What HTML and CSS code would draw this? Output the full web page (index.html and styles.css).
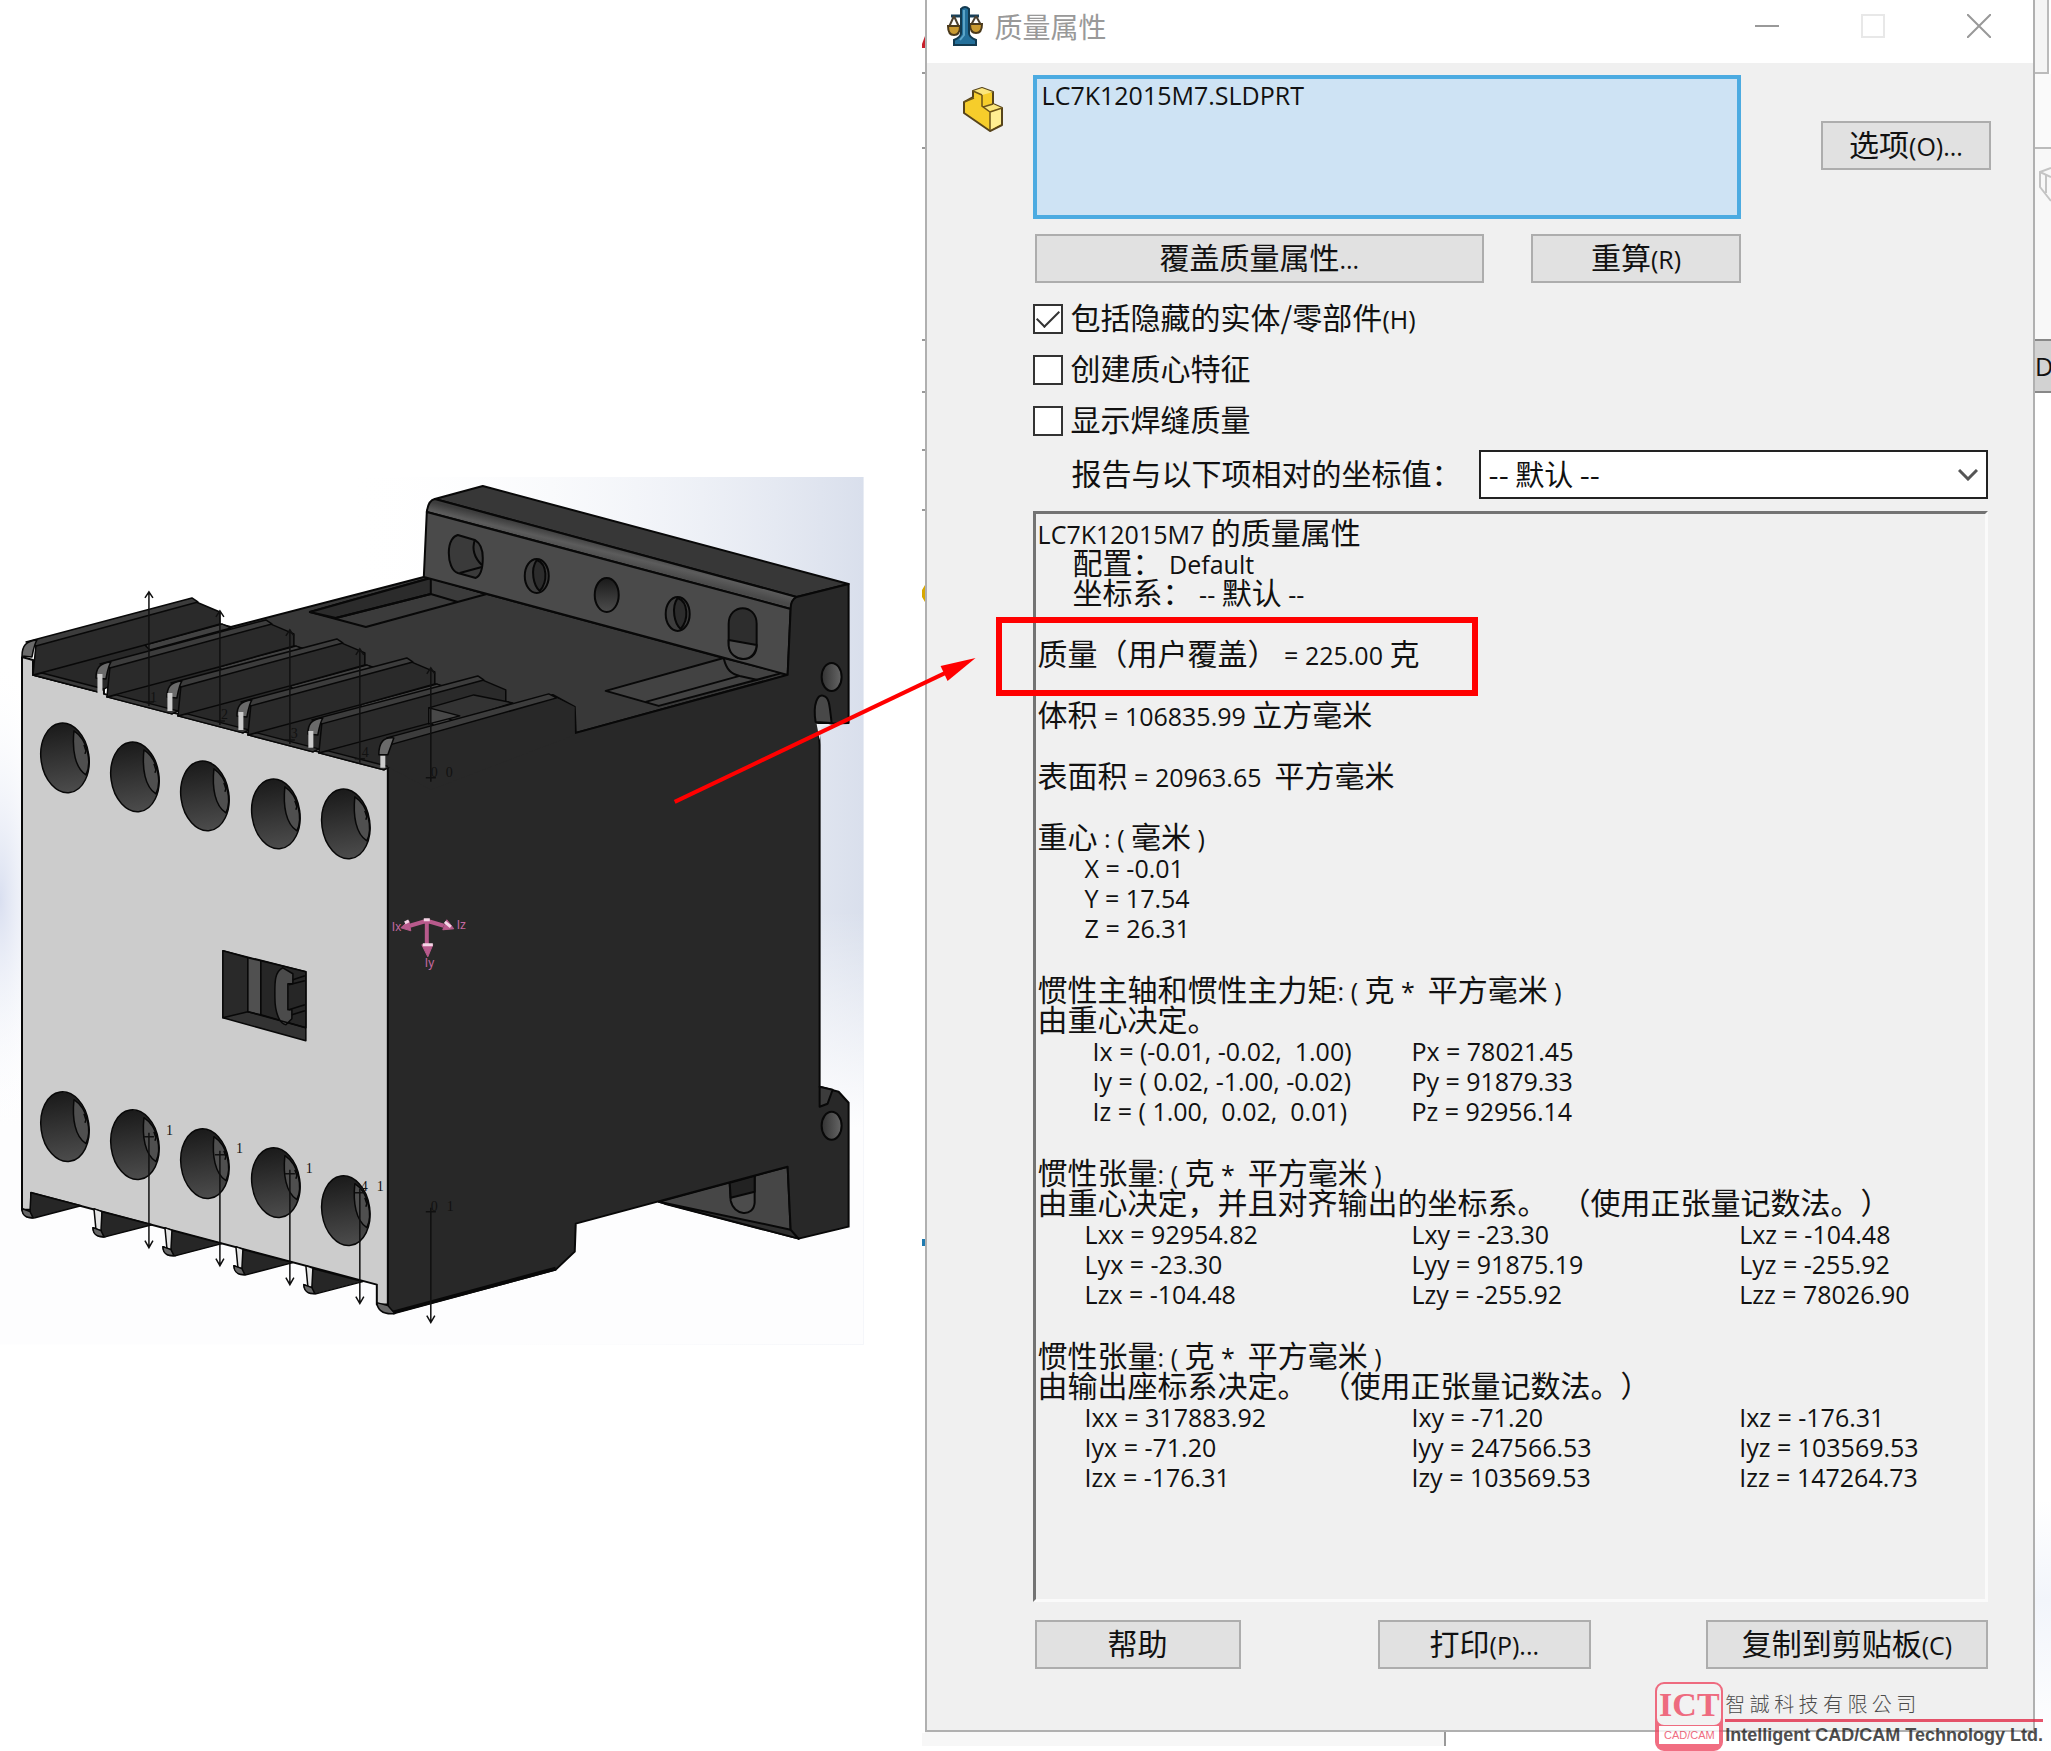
FILE: index.html
```html
<!DOCTYPE html>
<html lang="zh-CN">
<head>
  <meta charset="UTF-8" />
  <meta name="viewport" content="width=device-width, initial-scale=1.0" />
  <title>质量属性</title>
  <link rel="stylesheet" href="styles.css">
</head>
<body>
  <div class="page">
    <div class="model-pane">
      <svg class="model" viewBox="0 477 864 868" role="img" aria-label="LC7K12015M7">
        <defs>
          <linearGradient id="skyRight" x1="0" y1="0" x2="1" y2="0">
            <stop offset="0.4" stop-color="#ffffff" stop-opacity="0" />
            <stop offset="1" stop-color="#d9dfec" />
          </linearGradient>
          <radialGradient id="skyLeft" gradientUnits="userSpaceOnUse" cx="0" cy="0" r="1" gradientTransform="translate(0 900) scale(60 240)">
            <stop offset="0" stop-color="#d9dff0" />
            <stop offset="1" stop-color="#ffffff" stop-opacity="0" />
          </radialGradient>
          <linearGradient id="skyFade" x1="0" y1="0" x2="0" y2="1">
            <stop offset="0.5" stop-color="#ffffff" stop-opacity="0" />
            <stop offset="0.75" stop-color="#fdfdfe" />
          </linearGradient>
          <linearGradient id="bore" x1="0" y1="0" x2="0" y2="1">
            <stop offset="0" stop-color="#1a1a1a" />
            <stop offset="1" stop-color="#4c4c4c" />
          </linearGradient>
          <linearGradient id="pin" x1="0" y1="0" x2="1" y2="0">
            <stop offset="0" stop-color="#333333" />
            <stop offset="1" stop-color="#666666" />
          </linearGradient>
          <linearGradient id="bevel" gradientUnits="userSpaceOnUse" x1="615" y1="545" x2="611" y2="562">
            <stop offset="0" stop-color="#3c3c3c" />
            <stop offset="0.5" stop-color="#5c5c5c" />
            <stop offset="1" stop-color="#4a4a4a" />
          </linearGradient>
          <g id="terminal">
            <ellipse rx="24" ry="35" transform="rotate(-8)" fill="url(#bore)" />
            <path d="M9 -27C7 -8 10 10 21 17C27 5 23 -18 9 -27Z" fill="#4f4f4f" />
            <path d="M19 -13l2 6l-1 3" fill="none" />
          </g>
          <g id="fin">
            <path d="M33 675L145 642L220 624L232 627L98 692Z" fill="#282828" />
            <path d="M33 675L98 692L104 689L42 673Z" fill="#3a3a3a" />
            <path d="M145 645L222 624L231 628L150 650Z" fill="#424242" />
            <path d="M33 675L36 645L194 601L220 612V624L145 645Z" fill="#2a2a2a" />
            <path d="M26 642L192 598L198 602L36 646Z" fill="#3c3c3c" />
            <path d="M22 656C22 646 26 641 37 640C34 645 33 652 32 657Z" fill="#6a6a6a" />
          </g>
          <g id="lowerFin">
            <path d="M31 1193L81 1206L35 1218C28 1219 23 1217 22 1209L30 1212Z" fill="#262626" />
            <path d="M22 1209L30 1212L33 1218C26 1218 22 1216 22 1209Z" fill="#666666" />
          </g>
          <path id="axisUp" d="M0 0V114M-4 6L0 0L4 6M-5 110H5" fill="none" />
          <path id="axisDown" d="M0 -4V111M-4 104L0 111L4 104M-5 0H5" fill="none" />
        </defs>

        <rect y="477" width="864" height="868" fill="#ffffff" />
        <rect y="477" width="864" height="868" fill="url(#skyRight)" />
        <rect y="477" width="864" height="868" fill="url(#skyFade)" />
        <rect y="477" width="864" height="868" fill="url(#skyLeft)" />

        <g stroke="#080808" stroke-width="2" stroke-linejoin="round">
          <!-- top deck -->
          <path d="M200 640L231 627L424 577L724 658L788 675L576 733L480 760L388 760L150 700Z" fill="#383838" />
          <path d="M310 612L431 578L487 594L366 627Z" fill="#3b3b3b" />
          <path d="M310 612L431 578V594L336 618Z" fill="#2b2b2b" />
          <path d="M336 618L431 594L458 602M431 578L487 594" fill="none" />
          <path d="M606 691L724 658L783 673L659 706Z" fill="#424242" />
          <path d="M646 702L740 676L758 680M724 658C727 671 732 674 740 676" fill="none" />

          <!-- rear mounting flange -->
          <path d="M435 499L483 486L849 584L797 597Z" fill="#373737" />
          <path d="M427 512C428 504 430 500 435 499L797 597C793 600 791 604 791 609Z" fill="url(#bevel)" />
          <path d="M427 512L791 609L788 675L424 577Z" fill="#4a4a4a" />
          <path d="M449 553C449 541 454 536 458 535L475 540C480 543 483 550 483 558C483 570 480 576 476 578L458 573C452 571 449 562 449 553Z" fill="#3a3a3a" />
          <path d="M475 540C472 549 475 558 482 565M460 573L482 567" fill="none" />
          <ellipse cx="537" cy="576" rx="12" ry="17" fill="#3d3d3d" />
          <path d="M537 560C530 570 534 586 540 591C548 582 548 564 537 560Z" fill="#2c2c2c" />
          <ellipse cx="607" cy="595" rx="12" ry="17" fill="url(#bore)" />
          <ellipse cx="678" cy="614" rx="12" ry="17" fill="#3d3d3d" />
          <path d="M678 598C671 608 675 624 681 629C689 620 689 602 678 598Z" fill="#2c2c2c" />
          <path d="M729 624C729 603 757 603 757 624V646C756 666 729 662 729 642Z" fill="#2d2d2d" />
          <path d="M729 640L757 645C756 664 731 663 729 646Z" fill="#4c4c4c" />

          <!-- lower flange -->
          <path d="M659 1202L788 1167L791 1230L799 1239Z" fill="#464646" />
          <path d="M659 1202L791 1230L799 1239L665 1204Z" fill="#303030" />
          <path d="M730 1183L755 1176V1203C754 1218 734 1216 731 1201Z" fill="#4c4c4c" />
          <path d="M730 1183L755 1176V1192L731 1198Z" fill="#222222" />

          <!-- side wall -->
          <path d="M387 750V742L553 695L575 707L576 733L788 675L791 609C791 603 793 599 797 597L849 584V723L819 724L820 745V1087L839 1092L849 1103V1227L799 1239L791 1230L788 1167L576 1224L575 1252L556 1270L395 1313L388 1313Z" fill="#282828" />
          <path d="M393 1313L556 1269" stroke-width="4" />
          <path d="M820 1087L833 1090L828 1104L820 1107Z" fill="#3c3c3c" />
          <ellipse cx="832" cy="677" rx="10" ry="14" fill="url(#pin)" />
          <path d="M816 722C813 704 818 694 824 696C830 697 830 707 832 723Z" fill="#484848" />
          <path d="M817 724H832L822 727L820 740Z" fill="#eef0f5" stroke="none" />
          <ellipse cx="832" cy="1126" rx="10" ry="14" fill="url(#pin)" />

          <!-- front cover -->
          <path d="M22 657L33 660V675L98 692V668L104 664V694L168 711V686L174 682V713L238 730V705L245 701V732L309 749V724L315 720V751L379 767V748L388 745V1305H377V1285L31 1193V1210H22Z" fill="#cccccc" />
        </g>

        <g stroke="#080808" stroke-width="1.5" stroke-linejoin="round">
          <use href="#fin" />
          <use href="#fin" x="74" y="22" />
          <use href="#fin" x="145" y="41" />
          <use href="#fin" x="215" y="60" />
          <use href="#fin" x="286" y="78" />
          <path d="M429 708L474 695L513 703L455 722Z" fill="#333333" />
          <path d="M429 708V724L460 716Z" fill="#484848" />
          <path d="M388 767V744L553 696L575 707V735L431 790Z" fill="#282828" stroke="none" />
          <path d="M387 738L549 694L557 698L390 745Z" fill="#3c3c3c" />
          <path d="M379 755C379 742 384 737 394 738L388 755Z" fill="#6a6a6a" />
          <path d="M100 674V693M170 693V711M241 712V730M311 731V748M383 756V768" stroke="#cccccc" stroke-width="5" />
          <use href="#lowerFin" />
          <path d="M94 1209L102 1212L104 1237L96 1230ZM165 1228L173 1231L175 1256L167 1249ZM236 1247L244 1250L246 1275L238 1268ZM306 1266L314 1269L316 1294L308 1287Z" fill="#e4e4e4" />
          <use href="#lowerFin" x="71" y="19" />
          <use href="#lowerFin" x="141" y="38" />
          <use href="#lowerFin" x="212" y="57" />
          <use href="#lowerFin" x="282" y="76" />
          <path d="M377 1303L388 1306L395 1314C384 1315 378 1312 377 1303Z" fill="#666666" />

          <use href="#terminal" x="65" y="758" />
          <use href="#terminal" x="135" y="777" />
          <use href="#terminal" x="205" y="796" />
          <use href="#terminal" x="276" y="814" />
          <use href="#terminal" x="346" y="824" />
          <use href="#terminal" x="65" y="1127" />
          <use href="#terminal" x="135" y="1145" />
          <use href="#terminal" x="205" y="1164" />
          <use href="#terminal" x="276" y="1183" />
          <use href="#terminal" x="346" y="1211" />

          <!-- indicator window -->
          <path d="M223 951L306 972V1041L223 1018Z" fill="#333333" />
          <path d="M223 951L248 958V1012L223 1018Z" fill="#292929" />
          <path d="M248 958L261 961V1015L248 1012Z" fill="#505050" />
          <path d="M261 961L306 972V1028L261 1015Z" fill="#262626" />
          <path d="M283 968C274 972 275 985 275 997C275 1014 280 1024 286 1025L292 1019V1010L288 1010V984L293 984V974Z" fill="#4b4b4b" />
          <path d="M293 980L305 976M289 985L305 981M289 1010L305 1005M292 1015L305 1011M248 1012L306 1028" fill="none" />
        </g>

        <g stroke="#101010" stroke-width="1.5">
          <use href="#axisUp" x="149" y="592" />
          <use href="#axisUp" x="220" y="611" />
          <use href="#axisUp" x="290" y="630" />
          <use href="#axisUp" x="360" y="649" />
          <use href="#axisUp" x="431" y="668" />
          <use href="#axisDown" x="149" y="1137" />
          <use href="#axisDown" x="220" y="1155" />
          <use href="#axisDown" x="290" y="1174" />
          <use href="#axisDown" x="360" y="1193" />
          <use href="#axisDown" x="431" y="1212" />
        </g>
        <g class="axis-label">
          <text x="150" y="702">1</text>
          <text x="221" y="719">2</text>
          <text x="291" y="738">3</text>
          <text x="362" y="757">4</text>
          <text x="166" y="1135">1</text>
          <text x="236" y="1153">1</text>
          <text x="306" y="1173">1</text>
          <text x="361" y="1191">4</text>
          <text x="377" y="1191">1</text>
          <text x="431" y="1211">0</text>
          <text x="447" y="1211">1</text>
          <text x="431" y="777">0</text>
          <text x="446" y="777">0</text>
        </g>

        <!-- centre of mass triad -->
        <g fill="#b85a8c" stroke="#b85a8c">
          <path d="M427 922V948M427 921L410 926M427 921L444 926" fill="none" stroke-width="4" />
          <path d="M401 928L409 921L411 931ZM454 929L443 930L447 920ZM428 957L422 945H433Z" />
          <path d="M405 923L409 921M445 922L451 927M423 945H433M424 920H430" stroke="#f5d5e6" stroke-width="3" />
        </g>
        <g class="triad-label">
          <text x="392" y="931">Ix</text>
          <text x="457" y="929">Iz</text>
          <text x="425" y="967">Iy</text>
        </g>

        <path d="M675 802L948 672" stroke="#ff0000" stroke-width="4" />
        <path d="M976 658L941 666L948 681Z" fill="#ff0000" />
      </svg>
    </div>

    <svg class="left-edge" viewBox="0 0 3 1751" preserveAspectRatio="none" aria-hidden="true">
      <path d="M3 36V48H0V44Z" fill="#c8202c" />
      <path d="M0 73H3M0 148H3M0 340H3M0 392H3M0 450H3M0 510H3" stroke="#999999" stroke-width="2" />
      <path d="M3 585L0 590V597L3 602Z" fill="#d8a800" />
      <path d="M0 1239H3V1246H0Z" fill="#1f7bb0" />
      <path d="M0 1733H3V1746H0Z" fill="#f7f7f7" />
    </svg>

    <div class="dialog-column">
      <section class="dialog">
        <header class="title-bar">
          <svg class="scale-icon" viewBox="0 0 36 40" aria-hidden="true">
            <path d="M4 10H32" stroke="#173f58" stroke-width="3" />
            <path d="M7 10L2 21M7 10L12 21M29 10L24 19M29 10L34 19" stroke="#4b4030" stroke-width="2" />
            <path d="M1 20H13C13 27 10 29 7 29S1 27 1 20ZM23 18H35C35 25 32 27 29 27S23 25 23 18Z" fill="#c99a32" stroke="#4b3a1c" stroke-width="2" />
            <path d="M14 3Q18 -1 22 3V27Q22 31 29 34V39H7V34Q14 31 14 27Z" fill="#24709b" stroke="#123a50" stroke-width="2" />
            <path d="M17 4V29L13 34" fill="none" stroke="#5ca5c8" stroke-width="2" />
          </svg>
          <h1>质量属性</h1>
          <div class="window-controls">
            <button type="button" aria-label="最小化"><svg viewBox="0 0 24 24"><path d="M0 12H24" stroke="#999999" stroke-width="2" /></svg></button>
            <button type="button" aria-label="最大化" disabled><svg viewBox="0 0 24 24"><path d="M1 1H23V23H1Z" fill="none" stroke="#e8e8e8" stroke-width="2" /></svg></button>
            <button type="button" aria-label="关闭"><svg viewBox="0 0 24 24"><path d="M0 0L24 24M24 0L0 24" stroke="#999999" stroke-width="2" /></svg></button>
          </div>
        </header>

        <div class="dialog-body">
          <div class="selection">
            <svg class="part-icon" viewBox="0 0 42 46" aria-hidden="true">
              <path d="M2 15L11 10V4L20 1L31 5V17L40 21V38L28 44L2 26Z" fill="#f6cd2b" stroke="#57441b" stroke-width="2" stroke-linejoin="round" />
              <path d="M11 4L20 8L31 5L20 1ZM27 24L40 21L31 17L21 19Z" fill="#fbe67c" />
              <path d="M28 25L39 21V37L28 43Z" fill="#ffee92" />
              <path d="M20 8V19L28 25V43M28 25L40 21M11 4L20 8M31 17L21 20M2 15L12 11" fill="none" stroke="#6b5318" stroke-width="1.5" />
            </svg>
            <div class="file-list">LC7K12015M7.SLDPRT</div>
            <button type="button" class="btn btn-options"><span class="cn">选项</span>(O)...</button>
          </div>

          <div class="content">
            <div class="actions">
              <button type="button" class="btn btn-override"><span class="cn">覆盖质量属性</span>...</button>
              <button type="button" class="btn btn-recalc"><span class="cn">重算</span>(R)</button>
            </div>

            <div class="checks">
              <label class="check"><input type="checkbox" checked><span><span class="cn">包括隐藏的实体/零部件</span>(H)</span></label>
              <label class="check"><input type="checkbox"><span><span class="cn">创建质心特征</span></span></label>
              <label class="check"><input type="checkbox"><span><span class="cn">显示焊缝质量</span></span></label>
            </div>

            <div class="coordinate">
              <label for="coordinate"><span class="cn">报告与以下项相对的坐标值：</span></label>
              <div class="select-box">
                <select id="coordinate"><option>-- 默认 --</option></select>
                <svg viewBox="0 0 20 12" aria-hidden="true"><path d="M1 1L10 10L19 1" fill="none" stroke="#555555" stroke-width="3" /></svg>
              </div>
            </div>

            <div class="report">
              <div class="group">
                <p>LC7K12015M7 <span class="cn">的质量属性</span></p>
                <p class="indent"><span class="cn">配置：</span> Default</p>
                <p class="indent"><span class="cn">坐标系：</span> -- <span class="cn">默认</span> --</p>
              </div>
              <div class="group marked">
                <p><span class="cn">质量（用户覆盖）</span> = 225.00 <span class="cn">克</span></p>
              </div>
              <div class="group">
                <p><span class="cn">体积</span> = 106835.99 <span class="cn">立方毫米</span></p>
              </div>
              <div class="group">
                <p><span class="cn">表面积</span> = 20963.65  <span class="cn">平方毫米</span></p>
              </div>
              <div class="group">
                <p><span class="cn">重心</span> : ( <span class="cn">毫米</span> )</p>
                <table>
                  <tr><td>X = -0.01</td></tr>
                  <tr><td>Y = 17.54</td></tr>
                  <tr><td>Z = 26.31</td></tr>
                </table>
              </div>
              <div class="group">
                <p><span class="cn">惯性主轴和惯性主力矩</span>: ( <span class="cn">克</span> *  <span class="cn">平方毫米</span> )</p>
                <p><span class="cn">由重心决定。</span></p>
                <table class="axes">
                  <tr><td>Ix = (-0.01, -0.02,  1.00)</td><td>Px = 78021.45</td><td></td></tr>
                  <tr><td>Iy = ( 0.02, -1.00, -0.02)</td><td>Py = 91879.33</td><td></td></tr>
                  <tr><td>Iz = ( 1.00,  0.02,  0.01)</td><td>Pz = 92956.14</td><td></td></tr>
                </table>
              </div>
              <div class="group">
                <p><span class="cn">惯性张量</span>: ( <span class="cn">克</span> *  <span class="cn">平方毫米</span> )</p>
                <p><span class="cn">由重心决定，并且对齐输出的坐标系。</span>  <span class="cn">（使用正张量记数法。）</span></p>
                <table>
                  <tr><td>Lxx = 92954.82</td><td>Lxy = -23.30</td><td>Lxz = -104.48</td></tr>
                  <tr><td>Lyx = -23.30</td><td>Lyy = 91875.19</td><td>Lyz = -255.92</td></tr>
                  <tr><td>Lzx = -104.48</td><td>Lzy = -255.92</td><td>Lzz = 78026.90</td></tr>
                </table>
              </div>
              <div class="group">
                <p><span class="cn">惯性张量</span>: ( <span class="cn">克</span> *  <span class="cn">平方毫米</span> )</p>
                <p><span class="cn">由输出座标系决定。</span>  <span class="cn">（使用正张量记数法。）</span></p>
                <table>
                  <tr><td>Ixx = 317883.92</td><td>Ixy = -71.20</td><td>Ixz = -176.31</td></tr>
                  <tr><td>Iyx = -71.20</td><td>Iyy = 247566.53</td><td>Iyz = 103569.53</td></tr>
                  <tr><td>Izx = -176.31</td><td>Izy = 103569.53</td><td>Izz = 147264.73</td></tr>
                </table>
              </div>
            </div>

            <footer class="footer">
              <button type="button" class="btn btn-help"><span class="cn">帮助</span></button>
              <button type="button" class="btn btn-print"><span class="cn">打印</span>(P)...</button>
              <button type="button" class="btn btn-copy"><span class="cn">复制到剪贴板</span>(C)</button>
            </footer>
          </div>
        </div>
      </section>
      <div class="status-strip"></div>
    </div>

    <div class="right-edge">
      <div class="edge-tabs"></div>
      <div class="edge-row"></div>
      <div class="edge-tools">
        <svg viewBox="0 0 12 36" aria-hidden="true"><path d="M12 1L1 5V20L12 34M1 5L12 10M7 8V26" fill="none" stroke="#c4c4c4" stroke-width="2" /></svg>
      </div>
      <div class="edge-header">D</div>
    </div>

    <div class="watermark">
      <div class="badge">
        <strong>ICT</strong>
        <span>CAD/CAM</span>
      </div>
      <div class="company">
        <div class="company-cn" lang="zh-TW">智 誠 科 技 有 限 公 司</div>
        <div class="company-en">Intelligent CAD/CAM Technology Ltd.</div>
      </div>
    </div>
  </div>
</body>
</html>
```
FILE: styles.css
```css
*, *::before, *::after {
  box-sizing: border-box;
}
body {
  margin: 0;
  background: #ffffff;
  color: #111111;
  font-family: 'Open Sans', 'Noto Sans CJK SC', sans-serif;
  font-size: 25px;
  line-height: 30px;
}
.page {
  position: relative;
  display: grid;
  grid-template-columns: minmax(0, 83fr) 3px minmax(0, 100fr) 16px;
  min-height: 100vh;
  overflow: hidden;
}
.cn {
  font-family: 'Noto Sans CJK SC', sans-serif;
  font-size: 30px;
  line-height: 0;
  text-spacing-trim: space-all;
}

/* model picture */
.model-pane {
  display: flex;
  align-items: center;
  padding: 71px 58px 0 0;
}
.model {
  position: relative;
  z-index: 2;
  display: block;
  width: 100%;
  overflow: visible;
}
.axis-label {
  font-family: 'Liberation Serif', serif;
  font-size: 14px;
  fill: #111111;
}
.triad-label {
  font-family: 'Liberation Sans', sans-serif;
  font-size: 12px;
  fill: #c468a0;
}
.left-edge {
  width: 3px;
  height: 100%;
}

/* dialog */
.dialog-column {
  display: flex;
  flex-direction: column;
}
.dialog {
  flex: 1;
  display: flex;
  flex-direction: column;
  background: #f0f0f0;
  border: 2px solid #b0b0b0;
  border-top: none;
}
.title-bar {
  display: flex;
  align-items: center;
  height: 63px;
  padding: 0 42px 11px 20px;
  background: #ffffff;
}
.scale-icon {
  width: 36px;
  height: 40px;
}
.title-bar h1 {
  margin: 0 0 0 12px;
  font-family: 'Noto Sans CJK SC', sans-serif;
  font-size: 28px;
  font-weight: 400;
  color: #999999;
}
.window-controls {
  display: flex;
  gap: 82px;
  margin-left: auto;
}
.window-controls button {
  width: 24px;
  height: 24px;
  padding: 0;
  border: none;
  background: none;
}
.window-controls svg {
  display: block;
  width: 24px;
  height: 24px;
}
.dialog-body {
  flex: 1;
  display: flex;
  flex-direction: column;
  padding: 12px 42px 61px 35px;
}
.selection {
  display: grid;
  grid-template-columns: 71px 1fr 170px;
}
.part-icon {
  width: 42px;
  height: 46px;
  margin-top: 12px;
}
.file-list {
  height: 144px;
  margin-right: 80px;
  padding: 1px 5px;
  border: 4px solid #4cabe1;
  background: #cee3f4;
}
.btn {
  height: 49px;
  padding: 0;
  border: 2px solid #adadad;
  background: #e1e1e1;
  color: #111111;
  font: inherit;
  white-space: nowrap;
}
.btn-options {
  margin-top: 46px;
}
.content {
  flex: 1;
  display: flex;
  flex-direction: column;
  padding-left: 71px;
}
.actions {
  display: flex;
  gap: 47px;
  margin: 15px 250px 0 2px;
}
.btn-override {
  flex: 1;
}
.btn-recalc {
  width: 210px;
}
.checks {
  margin-top: 10px;
}
.check {
  display: flex;
  align-items: center;
  height: 51px;
}
.check input {
  appearance: none;
  display: grid;
  place-items: center;
  width: 30px;
  height: 30px;
  margin: 0 8px 0 0;
  border: 2px solid #333333;
  background: #ffffff;
}
.check input:checked::before {
  content: '';
  width: 22px;
  height: 12px;
  margin-bottom: 6px;
  border-left: 2px solid #333333;
  border-bottom: 2px solid #333333;
  transform: rotate(-45deg);
}
.coordinate {
  display: flex;
  align-items: center;
  gap: 17px;
  margin: 4px 3px 0 39px;
}
.select-box {
  position: relative;
  flex: 1;
}
.select-box select {
  appearance: none;
  width: 100%;
  height: 49px;
  padding: 0 8px 6px;
  border: 2px solid #222222;
  border-radius: 0;
  background: #ffffff;
  color: #111111;
  font-family: 'Noto Sans CJK SC', sans-serif;
  font-size: 29px;
}
.select-box svg {
  position: absolute;
  top: 19px;
  right: 10px;
  width: 20px;
  height: 12px;
}

/* report */
.report {
  flex: 1;
  margin: 12px 3px 0 0;
  padding: 5px 0 0 2px;
  border: 3px solid;
  border-color: #737373 #fafafa #fafafa #737373;
}
.report .group {
  margin-bottom: 31px;
}
.report p {
  height: 30px;
  margin: 0;
  white-space: pre;
}
.report .indent {
  padding-left: 35px;
}
.report table {
  width: 100%;
  margin-bottom: 33px;
  table-layout: fixed;
  border-collapse: collapse;
}
.report td {
  height: 30px;
  padding: 0 0 0 47px;
  white-space: pre;
}
.report td + td {
  padding-left: 58px;
}
.report td + td + td {
  padding-left: 70px;
}
.report .axes td:first-child {
  padding-left: 55px;
}
.marked {
  position: relative;
}
.marked::after {
  content: '';
  position: absolute;
  top: -23px;
  left: -42px;
  width: 482px;
  height: 79px;
  border: 6px solid #ff0000;
}
.footer {
  display: flex;
  justify-content: space-between;
  margin: 18px 3px 0 2px;
}
.btn-help {
  width: 206px;
}
.btn-print {
  width: 213px;
  margin-left: 22px;
}
.btn-copy {
  width: 282px;
}
.status-strip {
  width: 47%;
  height: 14px;
  margin-bottom: 5px;
  background: #f7f7f7;
  border-right: 2px solid #999999;
}

/* application window behind the dialog */
.right-edge {
  background: linear-gradient(#ffffff 1500px, #f2f5fb 1600px, #ffffff);
}
.edge-tabs {
  height: 74px;
  margin-right: 2px;
  background: #f5f5f5;
  border-right: 2px solid #bbbbbb;
  border-bottom: 2px solid #bbbbbb;
}
.edge-row {
  height: 75px;
  background: #fafafa;
  border-bottom: 2px solid #bbbbbb;
}
.edge-tools {
  height: 190px;
  padding: 18px 0 0 4px;
  background: #f8f8f8;
}
.edge-tools svg {
  display: block;
  width: 12px;
  height: 36px;
}
.edge-header {
  height: 54px;
  border: 2px solid #888888;
  border-width: 2px 0;
  background: #d2d2d2;
  line-height: 50px;
  overflow: hidden;
}

/* company mark */
.watermark {
  position: absolute;
  right: 8px;
  bottom: 0;
  display: flex;
  gap: 2px;
  opacity: 0.8;
}
.badge {
  display: flex;
  flex-direction: column;
  justify-content: space-between;
  width: 68px;
  height: 69px;
  padding-bottom: 5px;
  border: 2px solid #ee4a64;
  border-radius: 9px;
  background: #ee4a64;
  text-align: center;
}
.badge strong {
  height: 41px;
  border-radius: 7px;
  background: #f3f3f3;
  color: #ee4a64;
  font-family: 'Liberation Serif', serif;
  font-size: 34px;
  line-height: 41px;
}
.badge span {
  height: 18px;
  margin: 0 2px;
  background: #ffffff;
  color: #ee4a64;
  font-family: 'Liberation Sans', sans-serif;
  font-size: 11px;
  line-height: 18px;
}
.company {
  padding-top: 10px;
}
.company-cn {
  height: 30px;
  border-bottom: 3px solid #e22b48;
  color: #222222;
  font-family: 'Noto Sans CJK TC', sans-serif;
  font-size: 20px;
  font-weight: 300;
  line-height: 24px;
}
.company-en {
  color: #222222;
  font-family: 'Liberation Sans', sans-serif;
  font-size: 18px;
  font-weight: 700;
  line-height: 26px;
}
```
